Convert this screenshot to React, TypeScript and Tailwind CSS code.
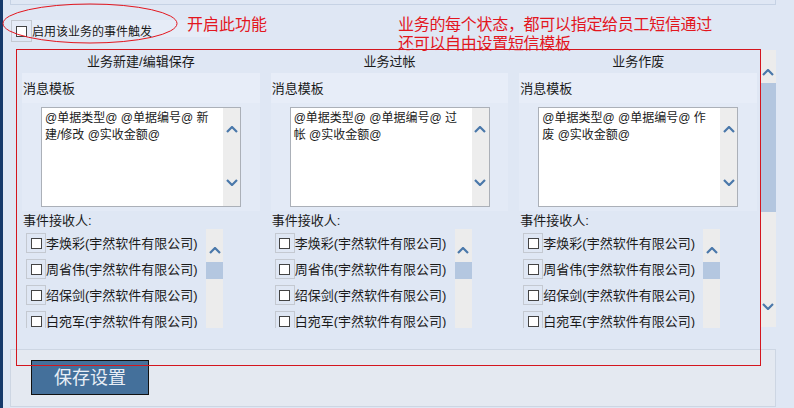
import React from 'react';

const Chevron: React.FC<{ down?: boolean }> = ({ down }) => (
  <svg width="12" height="7" viewBox="0 0 12 7" className="block shrink-0">
    <polyline
      points={down ? '1,1 6,6 11,1' : '1,6 6,1 11,6'}
      fill="none"
      stroke="#4a78aa"
      strokeWidth="2.2"
    />
  </svg>
);

const recipients = ['李焕彩', '周省伟', '绍保剑', '白宛军'];

interface ColumnProps {
  title: string;
  lines: string[];
}

const Column: React.FC<ColumnProps> = ({ title, lines }) => (
  <div className="flex flex-col pl-2 pr-[3px]">
    <div className="h-[23px] flex items-center justify-center text-[13px] leading-none">{title}</div>
    <div className="h-[30px] bg-[#e7edf8] flex items-center pl-[1px] text-[13px] leading-none">消息模板</div>
    <div className="h-[108px] bg-[#e3eaf6] pt-1 pl-[19px]">
      <div className="flex w-[200px] h-[100px] bg-white border border-[#abb0b8]">
        <div className="flex-1 px-[3px] pt-[2px] text-[12px] leading-[17px] text-[#1a1a1a]">
          {lines.map((l) => (
            <div key={l} className="whitespace-nowrap">{l}</div>
          ))}
        </div>
        <div className="w-[17px] bg-[#ededed] flex flex-col items-center justify-between pt-[18px] pb-[20px]">
          <Chevron />
          <Chevron down />
        </div>
      </div>
    </div>
    <div className="h-[18px] flex items-center pl-[1px] text-[13px] leading-none">事件接收人:</div>
    <div className="h-[99px] overflow-hidden flex pl-1">
      <div className="w-[180px] flex flex-col gap-[6px] pt-1">
        {recipients.map((n) => (
          <div key={n} className="flex items-center h-[20px] shrink-0">
            <div className="w-[20px] h-[20px] border border-[#c4c9d1] flex items-center justify-center shrink-0">
              <div className="w-[11px] h-[11px] bg-white border border-[#444]" />
            </div>
            <span className="text-[13px] leading-none whitespace-nowrap">{n}(宇然软件有限公司)</span>
          </div>
        ))}
      </div>
      <div className="w-[17px] bg-[#ececec] flex flex-col items-center pt-[18px]">
        <Chevron />
        <div className="w-full h-[17px] mt-[8px] bg-[#b4c7e0]" />
      </div>
    </div>
  </div>
);

export default function App() {
  return (
    <div className="relative w-[794px] h-[408px] overflow-hidden flex bg-[#dfe7f4] text-[#1a1a1a] font-['Liberation_Sans','Noto_Sans_CJK_SC',sans-serif]">
      <div className="w-[3px] bg-[#163a6b] shrink-0" />
      <div className="flex-1 flex flex-col pl-[7px] pr-[18px]">
        <div className="h-[5px] border-x border-b border-[#c6d2e4]" />

        <div className="mt-[15px] h-[22px] w-[200px] flex items-center bg-[linear-gradient(#e6ecf7_17px,transparent_17px)]">
          <div className="w-[21px] h-[22px] ml-px border border-[#c4c9d1] flex items-center justify-center">
            <div className="w-[11px] h-[11px] bg-white border border-[#444]" />
          </div>
          <span className="text-[12px] leading-none pt-[1px]">启用该业务的事件触发</span>
        </div>

        <div className="mt-[8px] h-[278px] flex">
          <div className="ml-1 w-[746px] grid grid-cols-3">
            <Column title="业务新建/编辑保存" lines={['@单据类型@ @单据编号@ 新', '建/修改 @实收金额@']} />
            <Column title="业务过帐" lines={['@单据类型@ @单据编号@ 过', '帐 @实收金额@']} />
            <Column title="业务作废" lines={['@单据类型@ @单据编号@ 作', '废 @实收金额@']} />
          </div>
          <div className="w-[16px] h-[277px] bg-[#ececec] flex flex-col items-center pt-[19px] pb-[17px]">
            <Chevron />
            <div className="w-full h-[129px] mt-[7px] bg-[#b3c6df]" />
            <div className="flex-1" />
            <Chevron down />
          </div>
        </div>

        <div className="mt-[21px] h-[58px] border border-[#cdd6e3] bg-[#e4e9f1] pl-[20px] pt-[10px]">
          <button className="w-[118px] h-[35px] bg-[#44709b] border border-[#111] text-[#e8eef6] text-[18px] leading-none">
            保存设置
          </button>
        </div>
      </div>

      {/* annotations */}
      <svg className="absolute left-0 top-0 pointer-events-none" width="200" height="50">
        <ellipse cx="90" cy="23.5" rx="87" ry="19.5" fill="none" stroke="#e3161e" strokeWidth="1" />
      </svg>
      <div className="absolute left-[187px] top-[15px] text-[16px] leading-[20px] text-[#e3161e]">开启此功能</div>
      <div className="absolute left-[398px] top-[15px] text-[16px] leading-[19px] text-[#e3161e] tracking-[-0.3px]">
        <div>业务的每个状态，都可以指定给员工短信通过</div>
        <div>还可以自由设置短信模板</div>
      </div>
      <div className="absolute left-[16px] top-[49px] w-[745px] h-[317px] border border-[#d4161e] pointer-events-none" />
    </div>
  );
}
